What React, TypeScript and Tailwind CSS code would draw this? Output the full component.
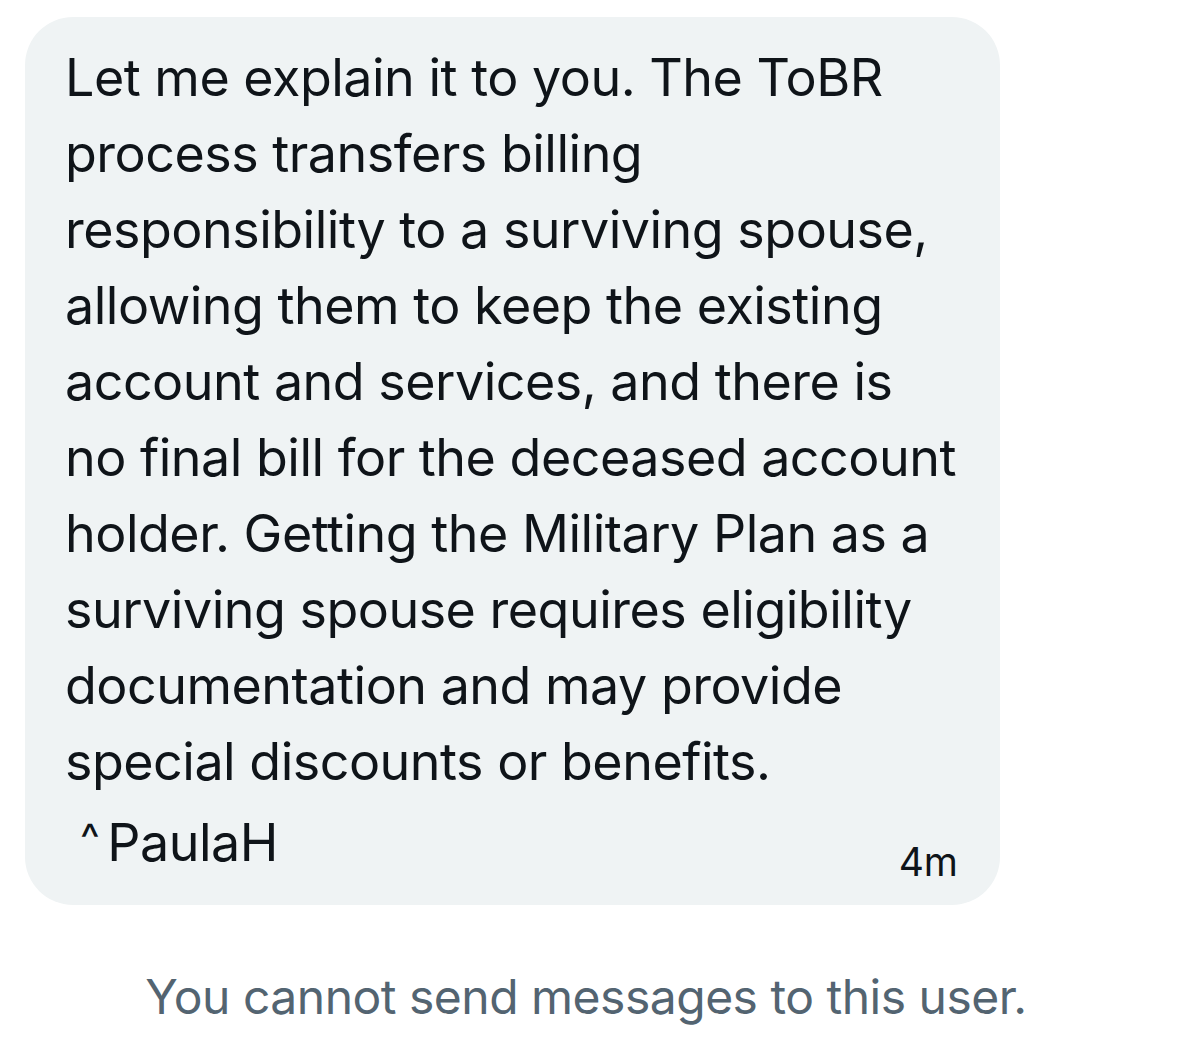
const lines = [
  'Let me explain it to you. The ToBR',
  'process transfers billing',
  'responsibility to a surviving spouse,',
  'allowing them to keep the existing',
  'account and services, and there is',
  'no final bill for the deceased account',
  'holder. Getting the Military Plan as a',
  'surviving spouse requires eligibility',
  'documentation and may provide',
  'special discounts or benefits.',
];

export default function App() {
  return (
    <div className="w-[1200px] h-[1052px] bg-white overflow-hidden font-['Inter',sans-serif] text-[#0f1419]">
      <div className="pt-[17px] pl-[25px]">
        <div className="w-[975px] h-[888px] rounded-[48px] bg-[#eff3f4] pt-[23px] pl-[40px] pr-[42px]">
          {lines.map((line) => (
            <div key={line} className="text-[52px] leading-[76px] whitespace-nowrap tracking-[-0.5px]">
              {line}
            </div>
          ))}
          <div className="flex justify-between items-start">
            <div className="text-[52px] leading-[76px] pl-[15px] whitespace-nowrap tracking-[-0.5px]">
              <span className="text-[42px] align-[8px] mr-[8px]">^</span>PaulaH
            </div>
            <div className="text-[39px] leading-[40px] pt-[42px]">4m</div>
          </div>
        </div>
      </div>
      <div className="pt-[62px] pr-[28px] text-center text-[48px] leading-[60px] text-[#536471] tracking-[-0.5px]">
        You cannot send messages to this user.
      </div>
    </div>
  );
}
